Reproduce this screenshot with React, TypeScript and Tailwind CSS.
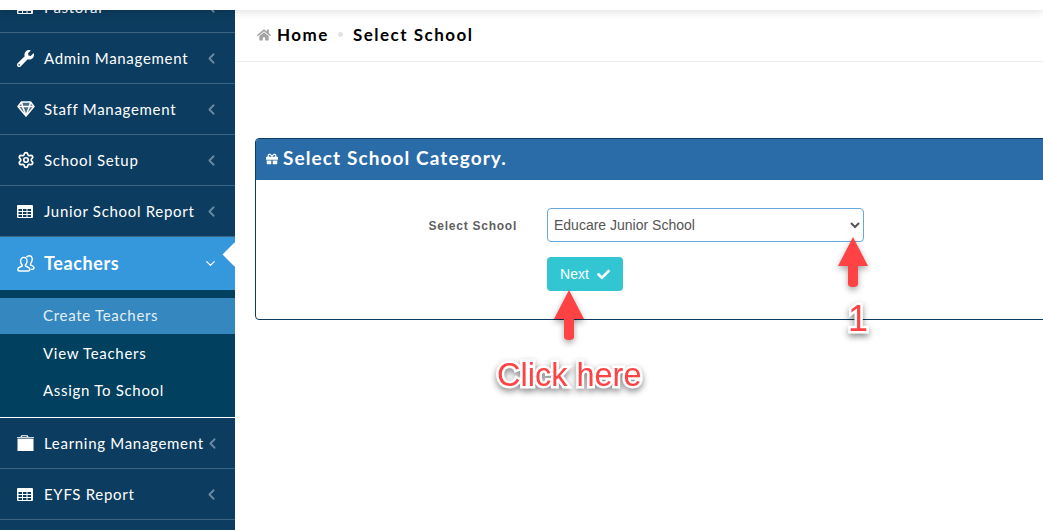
import { ChevronDown, ChevronLeft, Settings } from "lucide-react";
import { FaCheck, FaGift, FaHome, FaWrench } from "react-icons/fa";

type Row = { label: string; icon: React.ReactNode };

function TableIcon() {
  const cells = [];
  for (const y of [4, 7, 10]) {
    for (const x of [1.5, 6, 10.5]) {
      cells.push(<rect key={`${x}-${y}`} x={x} y={y} width="3.5" height="2" fill="#0c3c5f" />);
    }
  }
  return (
    <svg width="16" height="13" viewBox="0 0 16 13">
      <rect width="16" height="13" rx="1" fill="white" />
      {cells}
    </svg>
  );
}

function GemIcon() {
  return (
    <svg width="18" height="16" viewBox="0 0 18 16" fill="none" stroke="white" strokeWidth="1.5" strokeLinejoin="round">
      <path d="M4.5 1 H13.5 L17 5.5 L9 15 L1 5.5 Z" fill="white" fillOpacity="0.25" />
      <path d="M1 5.5 H17 M5.5 5.5 L9 14.5 L12.5 5.5 M4.5 1 L5.5 5.5 M13.5 1 L12.5 5.5" />
    </svg>
  );
}

function TeacherIcon() {
  return (
    <svg width="18" height="17" viewBox="0 0 18 17" fill="none" stroke="white" strokeWidth="1.4" strokeLinejoin="round">
      <path d="M9.5 2.2 C10.3 1.2 11.3 0.8 12.2 0.8 C14.4 0.8 15.4 2.6 15.2 4.8 C15.1 6.4 14.4 7.6 13.6 8.4 V10 C15 10.6 16.8 11 17 12.6 C17 13.6 16.4 14.4 15.2 14.4 H13.6" />
      <path d="M6.8 2.4 C4.6 2.4 3.4 4.2 3.6 6.4 C3.7 8 4.4 9.2 5.2 10 V11 C3.6 11.8 1 12.4 0.8 14.2 C0.8 15.4 1.4 16 2.6 16 H11 C12.2 16 12.8 15.4 12.8 14.2 C12.6 12.4 10 11.8 8.4 11 V10 C9.2 9.2 9.9 8 10 6.4 C10.2 4.2 9 2.4 6.8 2.4 Z" />
    </svg>
  );
}

function Folder() {
  return (
    <svg width="17" height="16" viewBox="0 0 17 16" fill="white">
      <path d="M3.5 2 C3.8 0.6 4.4 0.3 5 0.3 H10 C10.8 0.3 11.2 0.8 11.5 2 H10 C9.8 1.4 9.6 1.3 9 1.3 H6 C5.4 1.3 5.2 1.4 5 2 Z" />
      <rect x="0" y="2" width="17" height="0.8" />
      <rect x="0.5" y="3.6" width="16" height="12.4" />
    </svg>
  );
}

function Arrow({ className }: { className: string }) {
  return (
    <svg
      className={`absolute ${className}`}
      width="36"
      height="62"
      viewBox="0 0 36 62"
      style={{ filter: "drop-shadow(0 3px 3px rgba(0,0,0,0.35))" }}
    >
      <path d="M18 1 L33 30 H23 V48 Q23 51 18 51 Q13 51 13 48 V30 H3 Z" fill="#ff4244" />
    </svg>
  );
}

function NavRow({ label, icon }: Row) {
  return (
    <div className="flex h-[51px] items-center border-b border-[#3c6583] pl-[17px] pr-[15px] text-[15px] tracking-[0.7px] text-white">
      <span className="flex w-[27px] shrink-0 items-center">{icon}</span>
      <span className="flex-1 whitespace-nowrap">{label}</span>
      <ChevronLeft size={17} strokeWidth={2.5} className="shrink-0 text-[#6b8aa3]" />
    </div>
  );
}

const topRows: Row[] = [
  { label: "Pastoral", icon: <TableIcon /> },
  { label: "Admin Management", icon: <FaWrench size={17} /> },
  { label: "Staff Management", icon: <GemIcon /> },
  { label: "School Setup", icon: <Settings size={18} strokeWidth={2.3} /> },
];

const subLinks = ["View Teachers", "Assign To School"];

export default function App() {
  return (
    <div className="relative flex h-[530px] w-[1043px] flex-col overflow-hidden bg-white font-['Lato','Noto_Sans',sans-serif]">
      <div className="relative z-10 h-[10px] shrink-0 bg-white shadow-[0_2px_8px_rgba(0,0,0,0.12)]" />

      <div className="flex min-h-0 flex-1">
        <aside className="w-[235px] shrink-0 overflow-hidden bg-[#0c3c5f]">
          <div className="-mt-[28px]">
            {topRows.map((r) => (
              <NavRow key={r.label} {...r} />
            ))}
            <NavRow label="Junior School Report" icon={<TableIcon />} />

            <div className="relative flex h-[53px] items-center bg-[#3597dc] pl-[17px] pr-[17px] text-[18px] font-bold tracking-[0.6px] text-white">
              <span className="flex w-[27px] shrink-0 items-center">
                <TeacherIcon />
              </span>
              <span className="flex-1">Teachers</span>
              <ChevronDown size={15} />
              <span className="absolute -right-[8px] top-[9px] size-[17px] rotate-45 bg-white" />
            </div>

            <div className="border-b border-white bg-[#01405f] pb-[8px] pt-[8px] text-[15px] tracking-[0.7px] text-white">
              <div className="flex h-[36px] items-center bg-[#3488bf] pb-[2px] pl-[43px] text-[#e4eef5]">Create Teachers</div>
              {subLinks.map((s) => (
                <div key={s} className="flex h-[37.5px] items-center pl-[43px]">
                  {s}
                </div>
              ))}
            </div>

            <NavRow label="Learning Management" icon={<Folder />} />
            <NavRow label="EYFS Report" icon={<TableIcon />} />
          </div>
        </aside>

        <main className="min-w-0 flex-1">
          <div className="flex h-[52px] items-center border-b border-[#ececec] pb-[2px] pl-[22px] text-[17px] font-bold tracking-[1.5px] text-black">
            <FaHome size={14} className="mr-[6px] text-[#a3a3a3]" />
            <span>Home</span>
            <span className="ml-[9px] mr-[10px] size-[5px] rounded-full bg-[#e3e3e3]" />
            <span>Select School</span>
          </div>

          <section className="ml-[20px] mt-[76px] h-[182px] w-[830px] rounded-[4px] border border-[#0c3c5f]">
            <div className="flex h-[41px] items-center gap-[5px] rounded-t-[3px] bg-[#2a6ca8] pb-[2px] pl-[10px] text-[19px] font-bold tracking-[1.1px] text-white">
              <FaGift size={12} />
              <span>Select School Category.</span>
            </div>

            <div className="flex pt-[28px]">
              <label className="w-[291px] pr-[30px] pt-[9px] text-right font-['Liberation_Sans',sans-serif] text-[12px] font-bold tracking-[0.75px] text-[#5f5f5f]">
                Select School
              </label>
              <div>
                <select className="h-[34px] w-[317px] rounded-[4px] border border-[#66a8df] bg-white pl-[2px] font-['Liberation_Sans',sans-serif] text-[14px] text-[#555555]">
                  <option>Educare Junior School</option>
                </select>
                <button className="mt-[15px] flex h-[34px] w-[76px] items-center justify-center gap-[8px] rounded-[4px] bg-[#32c5d2] font-['Liberation_Sans',sans-serif] text-[14px] text-white">
                  Next <FaCheck size={13} />
                </button>
              </div>
            </div>
          </section>
        </main>
      </div>

      {/* annotations drawn over the page */}
      <Arrow className="left-[551px] top-[289px]" />
      <Arrow className="left-[835px] top-[236px]" />
      <span className="absolute left-[497px] top-[359px] font-['Liberation_Sans',sans-serif] text-[32.5px] leading-none text-[#ff4244] [-webkit-text-stroke:5px_white] [paint-order:stroke_fill] [filter:drop-shadow(0_3px_3px_rgba(0,0,0,0.45))]">
        Click here
      </span>
      <span className="absolute left-[848px] top-[301px] font-['Liberation_Sans',sans-serif] text-[36px] leading-none text-[#ff4244] [-webkit-text-stroke:5px_white] [paint-order:stroke_fill] [filter:drop-shadow(0_3px_3px_rgba(0,0,0,0.45))]">
        1
      </span>
    </div>
  );
}
